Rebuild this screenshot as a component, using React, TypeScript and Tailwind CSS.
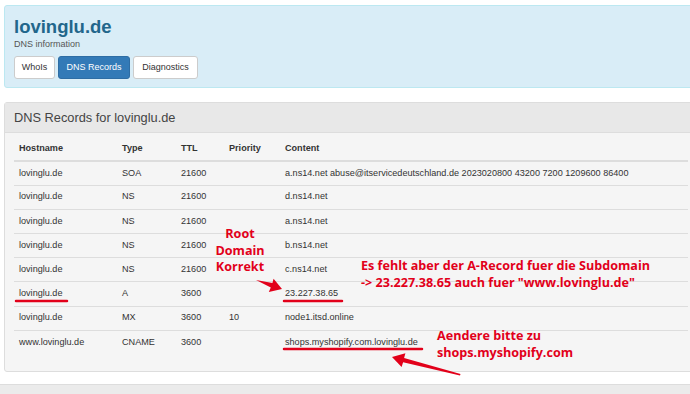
import React from "react";

type Row = { host: string; type: string; ttl: string; prio: string; content: string };

const rows: Row[] = [
  { host: "lovinglu.de", type: "SOA", ttl: "21600", prio: "", content: "a.ns14.net abuse@itservicedeutschland.de 2023020800 43200 7200 1209600 86400" },
  { host: "lovinglu.de", type: "NS", ttl: "21600", prio: "", content: "d.ns14.net" },
  { host: "lovinglu.de", type: "NS", ttl: "21600", prio: "", content: "a.ns14.net" },
  { host: "lovinglu.de", type: "NS", ttl: "21600", prio: "", content: "b.ns14.net" },
  { host: "lovinglu.de", type: "NS", ttl: "21600", prio: "", content: "c.ns14.net" },
  { host: "lovinglu.de", type: "A", ttl: "3600", prio: "", content: "23.227.38.65" },
  { host: "lovinglu.de", type: "MX", ttl: "3600", prio: "10", content: "node1.itsd.online" },
  { host: "www.lovinglu.de", type: "CNAME", ttl: "3600", prio: "", content: "shops.myshopify.com.lovinglu.de" },
];

const note = "font-['Open_Sans',sans-serif] font-bold text-[12.6px] leading-[16.5px] text-[#e2001a] whitespace-nowrap";

function Annotations() {
  return (
    <>
      <svg className="absolute left-0 top-0 pointer-events-none" width="690" height="394">
        {/* underlines */}
        <line x1="16" y1="301" x2="67" y2="301" stroke="#e2001a" strokeWidth="2.5" strokeLinecap="round" />
        <line x1="284" y1="301" x2="342" y2="301" stroke="#e2001a" strokeWidth="2.5" strokeLinecap="round" />
        <line x1="284" y1="349" x2="422" y2="349" stroke="#e2001a" strokeWidth="2.5" strokeLinecap="round" />
        {/* arrows */}
        <path d="M256 280 L270.8 287.6 L268.8 292 L282 289 L273.6 278.8 L272.4 283 Z" fill="#e2001a" />
        <path d="M460 375.5 L460.5 374 L404.1 358 L405.4 353.2 L392 357 L401.6 367 L403.1 362.2 Z" fill="#e2001a" />
      </svg>
      <div className={`absolute left-[205px] top-[226px] w-[70px] text-center ${note}`}>
        Root
        <br />
        Domain
        <br />
        Korrekt
      </div>
      <div className={`absolute left-[361px] top-[258px] ${note}`}>
        Es fehlt aber der A-Record fuer die Subdomain
        <br />
        -&gt; 23.227.38.65 auch fuer "www.lovinglu.de"
      </div>
      <div className={`absolute left-[437px] top-[328px] ${note}`}>
        Aendere bitte zu
        <br />
        shops.myshopify.com
      </div>
    </>
  );
}

export default function App() {
  return (
    <div className="relative w-[690px] h-[394px] overflow-hidden bg-white pt-[5px] font-['Liberation_Sans',Arial,sans-serif] text-[#333]">
      {/* Header */}
      <div className="ml-[4px] mr-[-8px] h-[83px] rounded-[3px] border border-[#bce8f1] bg-[#d9edf7] pl-[9px] pt-[10px]">
        <h1 className="text-[18.5px] leading-[22px] font-bold text-[#22668b]">lovinglu.de</h1>
        <p className="text-[9px] leading-[12px] text-[#555]">DNS information</p>
        <div className="mt-[6px] flex gap-[3px]">
          <button className="h-[23px] w-[41px] rounded-[3px] border border-[#ccc] bg-white text-[9px] text-[#333]">
            WhoIs
          </button>
          <button className="h-[23px] w-[72px] rounded-[3px] border border-[#2e6da4] bg-[#337ab7] text-[9px] text-white">
            DNS Records
          </button>
          <button className="h-[23px] w-[65px] rounded-[3px] border border-[#ccc] bg-white text-[9px] text-[#333]">
            Diagnostics
          </button>
        </div>
      </div>

      {/* DNS panel */}
      <div className="ml-[4px] mr-[-8px] mt-[14px] rounded-[3px] border border-[#ddd] bg-[#f5f5f5]">
        <div className="flex h-[30px] items-center border-b border-[#ddd] bg-[#e8e8e8] pl-[9px] text-[12.8px] text-[#444]">
          DNS Records for lovinglu.de
        </div>
        <div className="px-[9px] pt-[4px] pb-[16px]">
          <table className="w-full border-collapse text-[9.1px] text-[#333]">
            <colgroup>
              <col className="w-[103px]" />
              <col className="w-[59px]" />
              <col className="w-[48px]" />
              <col className="w-[56px]" />
              <col />
            </colgroup>
            <thead>
              <tr className="h-[24px] border-b-2 border-[#ddd] text-left font-bold">
                <th className="pl-[5px]">Hostname</th>
                <th className="pl-[5px]">Type</th>
                <th className="pl-[5px]">TTL</th>
                <th className="pl-[5px]">Priority</th>
                <th className="pl-[5px]">Content</th>
              </tr>
            </thead>
            <tbody>
              {rows.map((r, i) => (
                <tr key={i} className="h-[24.2px] border-t border-[#ddd] first:border-t-0">
                  <td className="pl-[5px]">{r.host}</td>
                  <td className="pl-[5px]">{r.type}</td>
                  <td className="pl-[5px]">{r.ttl}</td>
                  <td className="pl-[5px]">{r.prio}</td>
                  <td className="pl-[5px] whitespace-nowrap">{r.content}</td>
                </tr>
              ))}
            </tbody>
          </table>
        </div>
      </div>

      <div className="mt-[12px] h-[20px] border-t border-[#ddd] bg-[#ebebeb]" />

      <Annotations />
    </div>
  );
}
